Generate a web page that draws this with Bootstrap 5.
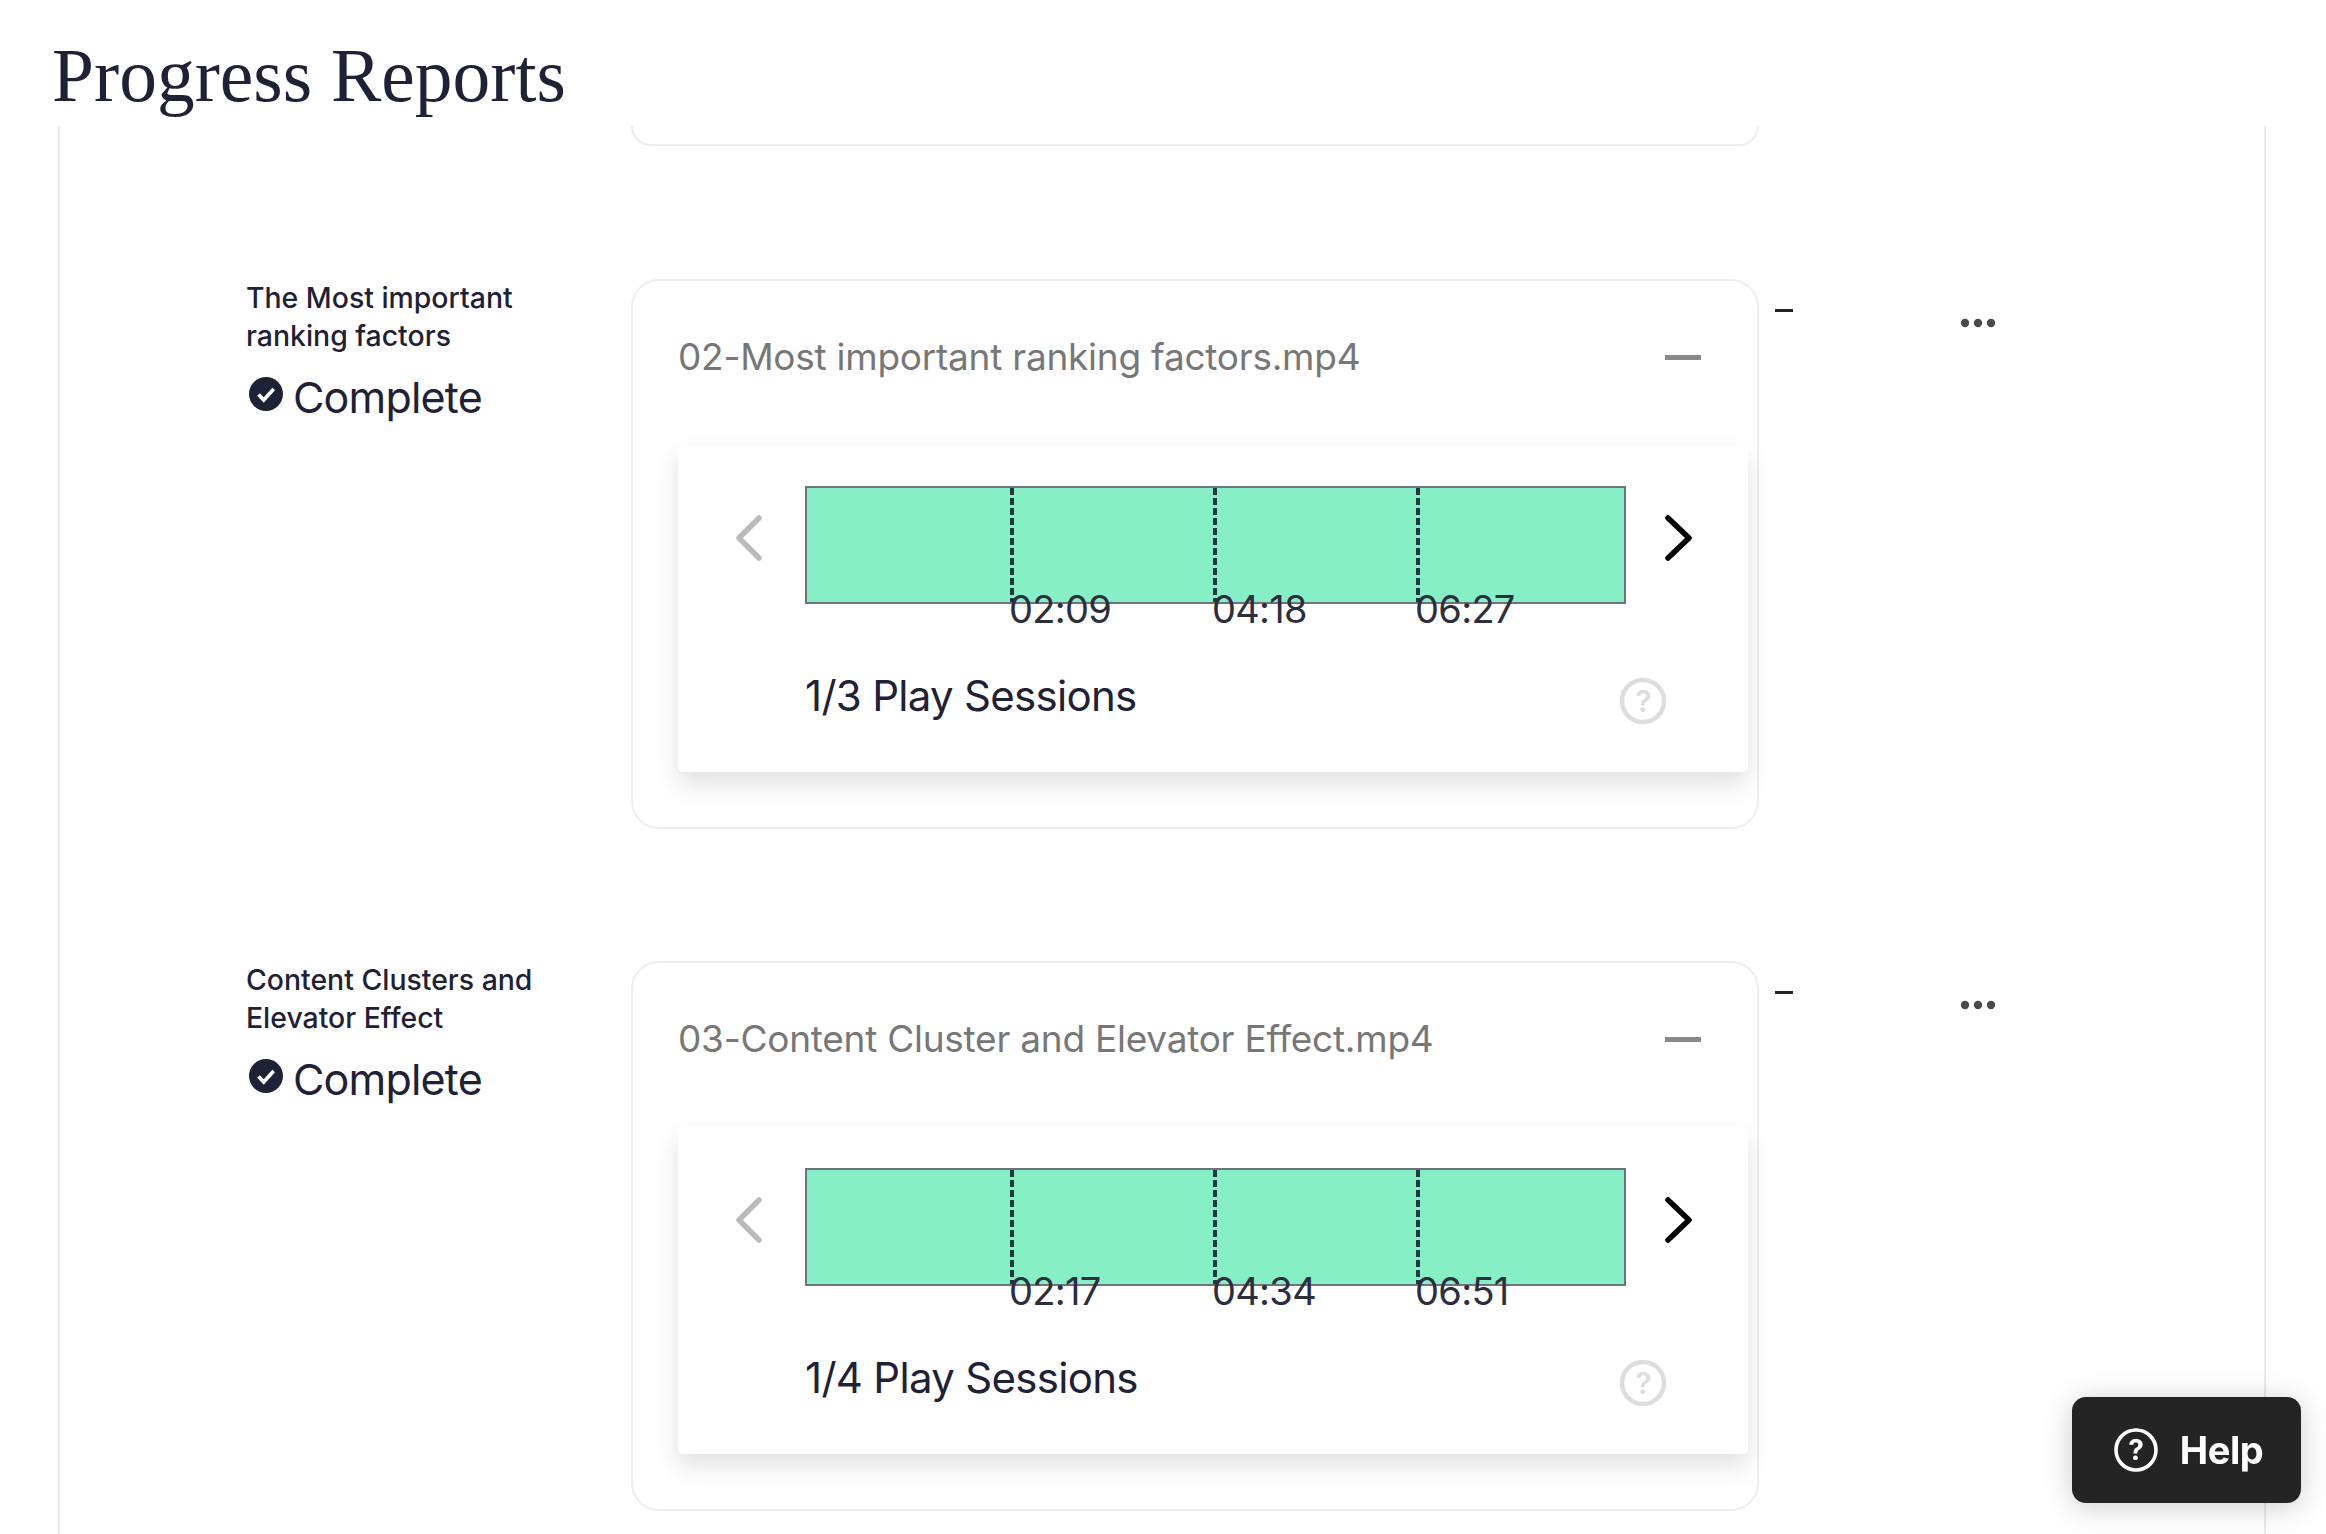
<!DOCTYPE html>
<html lang="en">

<head>
    <meta charset="UTF-8" />
    <title>Progress Reports</title>
    <link rel="stylesheet" href="https://cdn.jsdelivr.net/npm/bootstrap@5.3.0/dist/css/bootstrap.min.css" />
    <style>
        html, body {
            height: 100%;
            overflow: hidden;
        }

        body {
            font-family: Inter, "Liberation Sans", sans-serif;
            color: #1f2136;
            background: #fff;
        }

        .page-head {
            height: 126px;
            padding-left: 52px;
        }

        .page-title {
            font-family: "Liberation Serif", serif;
            font-size: 75.5px;
            line-height: 1;
            padding-top: 38px;
            margin: 0;
            color: #1f2136;
        }

        .report-panel {
            margin-left: 58px;
            width: 2208px;
            height: 1408px;
            border-left: 2px solid #e9e9eb;
            border-right: 2px solid #e9e9eb;
        }

        .stub-card {
            margin-left: 571px;
            width: 1128px;
            height: 20px;
            border: 2px solid #eeeeef;
            border-top: 0;
            border-radius: 0 0 28px 28px;
            margin-bottom: 133px;
        }

        .report-row {
            margin-bottom: 132px;
            height: 550px;
        }

        .lesson-col {
            width: 385px;
            padding-left: 186px;
            flex: none;
            box-sizing: content-box;
        }

        .lesson-name {
            font-size: 28.4px;
            font-weight: 500;
            line-height: 38px;
            width: 340px;
        }

        .lesson-status {
            font-size: 43px;
            letter-spacing: -.8px;
            line-height: 56px;
            gap: 10px;
            margin-top: 14px;
        }

        .status-check {
            margin-left: 3px;
            margin-bottom: 6px;
        }

        .file-card {
            width: 1128px;
            flex: none;
            border: 2px solid #eeeeef;
            border-radius: 28px;
            padding: 0 9px 0 45px;
        }

        .file-head {
            height: 164px;
            padding: 0 47px 12px 0;
            color: #777;
            font-size: 37px;
            letter-spacing: -.25px;
        }

        .file-minus {
            width: 36px;
            height: 5px;
            background: #888;
        }

        .player-card {
            height: 327px;
            border-radius: 5px;
            border: 0;
            box-shadow: 0 12px 24px rgba(0, 0, 0, .12);
            padding: 41px 0 0 56px;
        }

        .nav-arrow {
            width: 30px;
            height: 46px;
            flex: none;
            margin-bottom: 14px;
        }

        .time-bar {
            width: 821px;
            height: 118px;
            flex: none;
            background: #86efc6;
            border: 2px solid #6c757d;
            margin: 0 38px 0 41px;
        }

        .time-seg {
            flex: 0 0 203px;
            position: relative;
        }

        .time-seg:last-child {
            flex: 1 1 0;
        }

        .time-seg.marked::after {
            content: "";
            position: absolute;
            top: 0;
            bottom: 0;
            right: -4px;
            width: 4px;
            background: repeating-linear-gradient(to bottom, #1f3a3a 0 7px, transparent 7px 10px);
        }

        .time-label {
            position: absolute;
            left: 100%;
            top: 99px;
            margin-left: -1px;
            font-size: 38px;
            letter-spacing: -.7px;
            line-height: 44px;
            color: #2c2e3e;
            z-index: 1;
        }

        .sessions-line {
            margin-top: 63px;
            padding-left: 71px;
            padding-right: 82px;
            font-size: 42px;
            letter-spacing: -.7px;
            line-height: 56px;
        }

        .sessions-help {
            margin-top: 10px;
        }

        .side-dash {
            width: 18px;
            height: 3px;
            background: #222;
            margin: 30px 0 0 16px;
            flex: none;
        }

        .side-dots {
            margin: 39px 0 0 167px;
            flex: none;
        }

        .help-btn {
            position: fixed;
            left: 2072px;
            top: 1397px;
            width: 229px;
            height: 106px;
            padding-left: 16px;
            border-radius: 14px;
            background: #242424;
            border: 0;
            font-size: 38px;
            letter-spacing: -.4px;
            font-weight: 700;
            gap: 22px;
            box-shadow: 0 4px 30px rgba(0, 0, 0, .2);
        }
    </style>
</head>

<body>
    <div class="page-head">
        <h1 class="page-title">Progress Reports</h1>
    </div>

    <div class="report-panel">
        <div class="stub-card"></div>

        <!-- Lesson 2 -->
        <div class="report-row d-flex">
            <div class="lesson-col">
                <div class="lesson-name">The Most important ranking factors</div>
                <div class="lesson-status d-flex align-items-center">
                    <svg class="status-check" width="34" height="36" viewBox="0 0 34 36"><circle cx="17" cy="18" r="17" fill="#1f2136"/><path d="M9.5 18.5l5.2 5.5 10-11" fill="none" stroke="#fff" stroke-width="3.6"/></svg>
                    <span>Complete</span>
                </div>
            </div>
            <div class="card file-card">
                <div class="file-head d-flex align-items-center justify-content-between">
                    <span>02-Most important ranking factors.mp4</span>
                    <span class="file-minus"></span>
                </div>
                <div class="card player-card">
                    <div class="d-flex align-items-center">
                        <svg class="nav-arrow" viewBox="0 0 30 46"><path d="M25 3L5 23l20 20" fill="none" stroke="#bbb" stroke-width="5.5" stroke-linecap="round" stroke-linejoin="round"/></svg>
                        <div class="time-bar d-flex">
                            <div class="time-seg marked"><span class="time-label">02:09</span></div>
                            <div class="time-seg marked"><span class="time-label">04:18</span></div>
                            <div class="time-seg marked"><span class="time-label">06:27</span></div>
                            <div class="time-seg"></div>
                        </div>
                        <svg class="nav-arrow" viewBox="0 0 30 46"><path d="M4 3l21 20L4 43" fill="none" stroke="#000" stroke-width="5.5" stroke-linecap="round" stroke-linejoin="round"/></svg>
                    </div>
                    <div class="sessions-line d-flex align-items-center justify-content-between">
                        <span>1/3 Play Sessions</span>
                        <svg class="sessions-help" width="46" height="48" viewBox="0 0 46 48"><circle cx="23" cy="24" r="21" fill="none" stroke="#ddd" stroke-width="4.4"/><text x="23" y="35" text-anchor="middle" font-family="Inter, sans-serif" font-size="30" font-weight="600" fill="#ddd">?</text></svg>
                    </div>
                </div>
            </div>
            <div class="side-dash"></div>
            <svg class="side-dots" width="36" height="10" viewBox="0 0 36 10"><circle cx="5" cy="5" r="4.2" fill="#4a4a4a"/><circle cx="18" cy="5" r="4.2" fill="#4a4a4a"/><circle cx="31" cy="5" r="4.2" fill="#4a4a4a"/></svg>
        </div>

        <!-- Lesson 3 -->
        <div class="report-row d-flex">
            <div class="lesson-col">
                <div class="lesson-name">Content Clusters and Elevator Effect</div>
                <div class="lesson-status d-flex align-items-center">
                    <svg class="status-check" width="34" height="36" viewBox="0 0 34 36"><circle cx="17" cy="18" r="17" fill="#1f2136"/><path d="M9.5 18.5l5.2 5.5 10-11" fill="none" stroke="#fff" stroke-width="3.6"/></svg>
                    <span>Complete</span>
                </div>
            </div>
            <div class="card file-card">
                <div class="file-head d-flex align-items-center justify-content-between">
                    <span>03-Content Cluster and Elevator Effect.mp4</span>
                    <span class="file-minus"></span>
                </div>
                <div class="card player-card">
                    <div class="d-flex align-items-center">
                        <svg class="nav-arrow" viewBox="0 0 30 46"><path d="M25 3L5 23l20 20" fill="none" stroke="#bbb" stroke-width="5.5" stroke-linecap="round" stroke-linejoin="round"/></svg>
                        <div class="time-bar d-flex">
                            <div class="time-seg marked"><span class="time-label">02:17</span></div>
                            <div class="time-seg marked"><span class="time-label">04:34</span></div>
                            <div class="time-seg marked"><span class="time-label">06:51</span></div>
                            <div class="time-seg"></div>
                        </div>
                        <svg class="nav-arrow" viewBox="0 0 30 46"><path d="M4 3l21 20L4 43" fill="none" stroke="#000" stroke-width="5.5" stroke-linecap="round" stroke-linejoin="round"/></svg>
                    </div>
                    <div class="sessions-line d-flex align-items-center justify-content-between">
                        <span>1/4 Play Sessions</span>
                        <svg class="sessions-help" width="46" height="48" viewBox="0 0 46 48"><circle cx="23" cy="24" r="21" fill="none" stroke="#ddd" stroke-width="4.4"/><text x="23" y="35" text-anchor="middle" font-family="Inter, sans-serif" font-size="30" font-weight="600" fill="#ddd">?</text></svg>
                    </div>
                </div>
            </div>
            <div class="side-dash"></div>
            <svg class="side-dots" width="36" height="10" viewBox="0 0 36 10"><circle cx="5" cy="5" r="4.2" fill="#4a4a4a"/><circle cx="18" cy="5" r="4.2" fill="#4a4a4a"/><circle cx="31" cy="5" r="4.2" fill="#4a4a4a"/></svg>
        </div>
    </div>

    <button type="button" class="btn btn-dark help-btn d-flex align-items-center justify-content-center">
        <svg width="44" height="44" viewBox="0 0 44 44"><circle cx="22" cy="22" r="20" fill="none" stroke="#fff" stroke-width="3.6"/><text x="22" y="32" text-anchor="middle" font-family="Inter, sans-serif" font-size="28" font-weight="700" fill="#fff">?</text></svg>
        <span>Help</span>
    </button>

    <script src="https://cdn.jsdelivr.net/npm/bootstrap@5.3.0/dist/js/bootstrap.bundle.min.js"></script>
</body>

</html>
